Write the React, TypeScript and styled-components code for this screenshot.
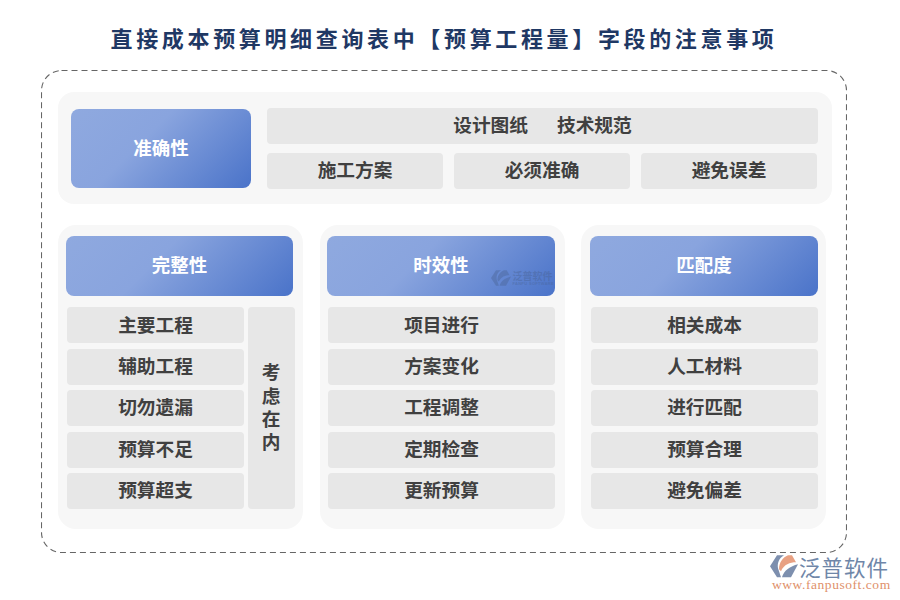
import * as React from "react";
import styled, { createGlobalStyle } from "styled-components";

const Global = createGlobalStyle`
  html, body {
    margin: 0;
    padding: 0;
    background: #fff;
  }
  body {
    font-family: "Noto Sans CJK SC", "Liberation Sans", sans-serif;
  }
`;

const Page = styled.div`
  position: relative;
  width: 900px;
  height: 600px;
  overflow: hidden;
  padding: 21px 0 0 41px;
  box-sizing: border-box;
`;

const Title = styled.h1`
  margin: 0 0 17px;
  width: 806px;
  height: 32px;
  font-size: 22px;
  line-height: 32px;
  font-weight: 700;
  letter-spacing: 3.65px;
  text-align: center;
  color: #1f3864;
  white-space: nowrap;
`;

const Frame = styled.div`
  position: relative;
  box-sizing: border-box;
  width: 806px;
  height: 483px;
  padding: 22px 15px 0 17px;
  display: flex;
  flex-direction: column;
  gap: 21px;
`;

const DashedOutline = styled.svg`
  position: absolute;
  left: 0;
  top: 0;
  pointer-events: none;
`;

const TopPanel = styled.section`
  box-sizing: border-box;
  height: 112px;
  background: #f7f7f7;
  border-radius: 16px;
  padding: 16px 14px 15px 13px;
  display: flex;
  gap: 16px;
`;

const Accent = styled.div<{ $h?: number; $w?: number }>`
  box-sizing: border-box;
  flex: 0 0 auto;
  display: flex;
  align-items: center;
  justify-content: center;
  padding-bottom: 4px;
  background: linear-gradient(135deg, #8fa9df 0%, #89a4de 40%, #4a73c9 100%);
  border-radius: 8px;
  color: #fff;
  font-size: 18.5px;
  font-weight: 700;
  position: relative;
  width: ${p => p.$w ?? 228}px;
  height: ${p => p.$h ?? 60}px;
`;

const TopAccent = styled(Accent)`
  margin-top: 1px;
`;

const Cell = styled.div`
  box-sizing: border-box;
  display: flex;
  align-items: center;
  justify-content: center;
  padding-bottom: 4px;
  background: #e7e7e7;
  border-radius: 4px;
  color: #404040;
  font-size: 18.7px;
  font-weight: 700;
  white-space: nowrap;
`;

const TopGrid = styled.div`
  flex: 1;
  display: grid;
  grid-template-columns: repeat(3, 176px);
  grid-template-rows: 36px 36px;
  column-gap: 11px;
  row-gap: 9px;

  ${Cell} {
    padding-bottom: 6px;
  }
`;

const WideCell = styled(Cell)`
  grid-column: 1 / -1;
  margin-right: -1px;
  gap: 29px;
`;

const Columns = styled.div`
  display: flex;
  gap: 16px;
`;

const Column = styled.section<{ $pl: number; $ml?: number }>`
  box-sizing: border-box;
  width: 245px;
  height: 304px;
  margin-left: ${p => p.$ml ?? 0}px;
  background: #f7f7f7;
  border-radius: 18px;
  padding: 11px 0 0 ${p => p.$pl}px;
`;

const Header = styled(Accent)`
  margin-bottom: 11px;
`;

const Body = styled.div`
  display: flex;
  gap: 4px;
  margin-left: 1px;
`;

const List = styled.div<{ $w: number }>`
  width: ${p => p.$w}px;
  display: grid;
  grid-template-rows: repeat(5, 36px);
  row-gap: 5.5px;

  ${Cell}:nth-child(3), ${Cell}:nth-child(5) {
    padding-bottom: 6px;
  }
`;

const Side = styled(Cell)`
  width: 47px;
  height: 202px;
  padding: 3px 1px 0 0;
  writing-mode: vertical-rl;
  letter-spacing: 4.4px;
`;

const Mark = styled.div`
  position: absolute;
  right: 1px;
  bottom: 10px;
  display: flex;
  align-items: center;
  gap: 1px;
  opacity: 0.38;
  color: #47608f;
`;

const MarkText = styled.div`
  display: flex;
  flex-direction: column;
  font-size: 10px;
  font-weight: 700;
  line-height: 10px;
  white-space: nowrap;
`;

const MarkSub = styled.span`
  font-family: "Liberation Sans", sans-serif;
  font-size: 4px;
  line-height: 5px;
  letter-spacing: 0.3px;
`;

const Logo = styled.div`
  position: absolute;
  left: 770px;
  top: 554px;
  width: 125px;
  background: #fff;
  display: grid;
  grid-template-columns: 28px auto;
  column-gap: 1px;
  align-items: center;
`;

const LogoName = styled.div`
  font-size: 21.5px;
  line-height: 25px;
  font-weight: 400;
  color: #6f86a8;
  letter-spacing: 1px;
  white-space: nowrap;
`;

const LogoUrl = styled.div`
  grid-column: 1 / -1;
  padding-left: 2px;
  font-family: "Liberation Serif", serif;
  font-size: 13.5px;
  line-height: 12px;
  letter-spacing: 0.55px;
  color: #e0906a;
  white-space: nowrap;
`;

function LogoGlyph({ size, leaf = "#e8a183", body = "#7d8fae" }: { size: number; leaf?: string; body?: string }): JSX.Element {
  return (
    <svg width={size} height={size * 0.8} viewBox="0 0 28 22">
      <path d="M0 11 L7 0 H14 C9 3 7 8 8 13 L11 22 H7 Z" fill={body} />
      <path d="M9 14 C9 7 13 2 18 0 H22 L26 7 C20 7 14 9 11 16 Z" fill={leaf} />
      <path d="M12 22 C14 15 20 11 28 9 L21 22 Z" fill={body} />
    </svg>
  );
}

const lists = {
  a: ["主要工程", "辅助工程", "切勿遗漏", "预算不足", "预算超支"],
  b: ["项目进行", "方案变化", "工程调整", "定期检查", "更新预算"],
  c: ["相关成本", "人工材料", "进行匹配", "预算合理", "避免偏差"],
};

export default function App(): JSX.Element {
  return (
    <Page>
      <Global />
      <Title>直接成本预算明细查询表中【预算工程量】字段的注意事项</Title>
      <Frame>
        <DashedOutline width="806" height="483" aria-hidden="true">
          <rect
            x="0.5"
            y="0.5"
            width="805"
            height="482"
            rx="20"
            fill="none"
            stroke="#666"
            strokeWidth="1.1"
            strokeDasharray="6 4"
          />
        </DashedOutline>
        <TopPanel>
          <TopAccent $w={180} $h={79}>
            准确性
          </TopAccent>
          <TopGrid>
            <WideCell>
              <span>设计图纸</span>
              <span>技术规范</span>
            </WideCell>
            <Cell>施工方案</Cell>
            <Cell>必须准确</Cell>
            <Cell>避免误差</Cell>
          </TopGrid>
        </TopPanel>
        <Columns>
          <Column $pl={8}>
            <Header $w={227}>完整性</Header>
            <Body>
              <List $w={177}>
                {lists.a.map(t => (
                  <Cell key={t}>{t}</Cell>
                ))}
              </List>
              <Side>考虑在内</Side>
            </Body>
          </Column>
          <Column $pl={7} $ml={1}>
            <Header>
              时效性
              <Mark>
                <LogoGlyph size={20} leaf="#47608f" body="#47608f" />
                <MarkText>
                  泛普软件
                  <MarkSub>FANPU SOFTWARE</MarkSub>
                </MarkText>
              </Mark>
            </Header>
            <Body>
              <List $w={227}>
                {lists.b.map(t => (
                  <Cell key={t}>{t}</Cell>
                ))}
              </List>
            </Body>
          </Column>
          <Column $pl={9}>
            <Header>匹配度</Header>
            <Body>
              <List $w={227}>
                {lists.c.map(t => (
                  <Cell key={t}>{t}</Cell>
                ))}
              </List>
            </Body>
          </Column>
        </Columns>
      </Frame>
      <Logo>
        <LogoGlyph size={28} />
        <LogoName>泛普软件</LogoName>
        <LogoUrl>www.fanpusoft.com</LogoUrl>
      </Logo>
    </Page>
  );
}
